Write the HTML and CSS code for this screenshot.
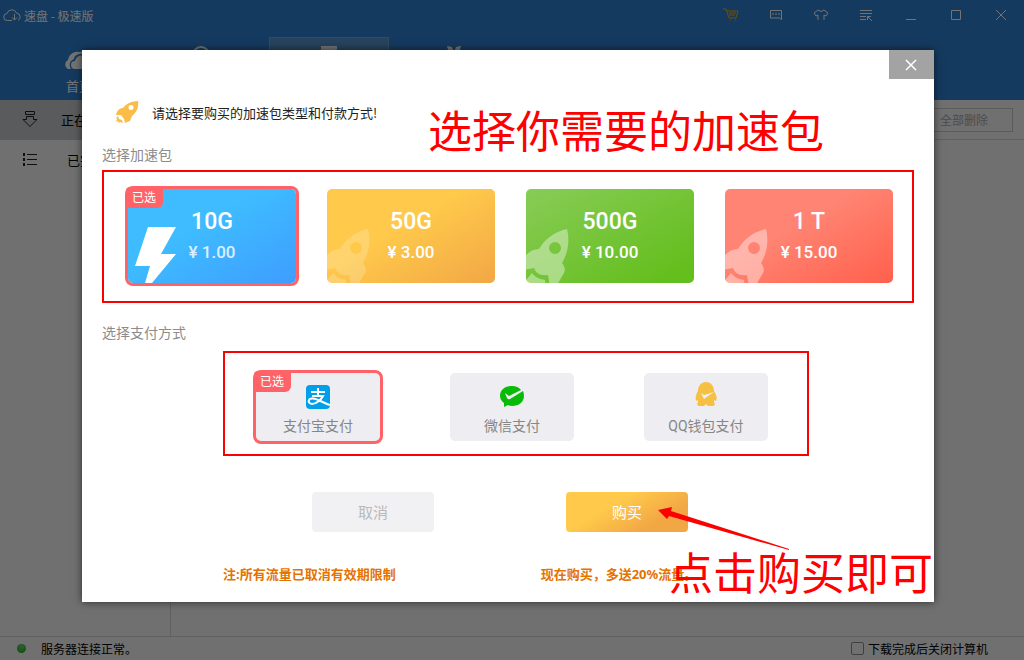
FILE: index.html
```html
<!DOCTYPE html>
<html lang="zh-CN">
<head>
    <meta charset="UTF-8">
    <meta name="viewport" content="width=device-width, initial-scale=1.0">
    <title>速盘 - 极速版</title>
    <link rel="stylesheet" href="styles.css">
</head>
<body>
    <svg class="sprite" aria-hidden="true">
        <symbol id="rocket" viewBox="0 0 44 56">
            <path fill-rule="evenodd" d="M41 2C28 5 19 12 13 22C7 22 3 25-2 30V43L8 41C10 46 14 49 22 48L24 60L31 58L38 46C40 42 38 39 36 36C42 26 44 14 41 2ZM29 15a6 6 0 1 1 0 12a6 6 0 1 1 0-12Z"/>
            <path d="M6 46C10 51 14 52 19 53L20 60L-2 60L1 52Z"/>
        </symbol>
    </svg>

    <div class="app">
        <header>
            <div class="title-bar">
                <svg class="logo" viewBox="0 0 18 14" width="18" height="14"><path d="M9 12.500H4.500a3.500 3.500 0 0 1-.5-7a5 5 0 0 1 9.500-.5a4 4 0 0 1 1.500 7.500M11.500 6v6M9 9.500l2.500 2.500L14 9.500"/></svg>
                <span class="app-name">速盘 - 极速版</span>
                <div class="window-tools">
                    <button type="button" class="cart" aria-label="购物车"><svg viewBox="0 0 16 14"><path d="M0 1h3l3 9h7l2-7H4M6 5h7M6 7h6M7 12h1M12 12h1"/></svg></button>
                    <button type="button" aria-label="消息"><svg viewBox="0 0 16 14"><path d="M2.500 2.500h11v9l-2-1.500h-9zM4 6h2M7 6h2M10 6h2"/></svg></button>
                    <button type="button" aria-label="皮肤"><svg viewBox="0 0 16 14"><path d="M5 2L1 5l2 3 2-1v5M11 2l4 3-2 3-2-1v5M5 2q3 3 6 0"/></svg></button>
                    <button type="button" aria-label="菜单"><svg viewBox="0 0 16 14"><path d="M2 2.500h12M2 5.500h12M2 8.500h6M2 11.500h6M9 8.500h4M9.500 8v4M10 9l4 4"/></svg></button>
                    <button type="button" aria-label="最小化"><svg viewBox="0 0 16 14"><path d="M3 11.500h10"/></svg></button>
                    <button type="button" aria-label="最大化"><svg viewBox="0 0 16 14"><path d="M3.500 2.500h9v9h-9z"/></svg></button>
                    <button type="button" aria-label="关闭"><svg viewBox="0 0 16 14"><path d="M3 2l10 10M13 2L3 12"/></svg></button>
                </div>
            </div>
            <nav class="tabs">
                <button type="button" class="tab">
                    <svg viewBox="0 0 32 20" width="32" height="20"><path d="M5 18a5 5 0 0 1 0-9C6 4 10 0 16 1q4-1 6 2C15 2 11 5 11 8c-5 2-5 7-3 10z"/><path d="M12 18a4 4 0 0 1 0-8c1-5 7-7 11-4q3 1 4 4a4 4 0 0 1 0 8z"/></svg>
                    首页
                </button>
                <button type="button" class="tab" aria-label="搜索"><svg viewBox="0 0 32 26" width="32" height="26"><circle class="ring" cx="13" cy="9" r="8"/></svg></button>
                <button type="button" class="tab active" aria-label="下载"><svg viewBox="0 0 32 26" width="32" height="26"><path d="M8 0h16v26H8z"/></svg></button>
                <button type="button" class="tab" aria-label="工具"><svg viewBox="0 0 32 26" width="32" height="26"><path d="M9 0l5 1 2 5 2-5 5-1-4 14h-6z"/></svg></button>
            </nav>
        </header>
        <div class="workspace">
            <aside>
                <button type="button" class="side-item active">
                    <svg viewBox="0 0 16 16" width="16" height="16"><path d="M3.500.5h9v3h-9zM4.500 5.500h7v3h3.500l-7 7-7-7h3.500z"/></svg>
                    正在下载
                </button>
                <button type="button" class="side-item done">
                    <svg viewBox="0 0 16 16" width="16" height="16"><path d="M5 3.500h10M5 8.500h10M5 13.500h10"/><path class="bullets" d="M1 3.500h2M1 8.500h2M1 13.500h2"/></svg>
                    已完成
                </button>
            </aside>
            <main>
                <div class="toolbar"><button type="button" class="delete-all" disabled>全部删除</button></div>
            </main>
        </div>
        <footer>
            <span class="status"><i class="dot"></i>服务器连接正常。</span>
            <label class="shutdown"><input type="checkbox">下载完成后关闭计算机</label>
        </footer>
    </div>

    <div class="backdrop">
        <form class="modal" role="dialog" aria-labelledby="dialogTitle">
            <button type="button" class="close" aria-label="关闭"><svg viewBox="0 0 12 12" width="12" height="12"><path d="M1 1l10 10M11 1L1 11"/></svg></button>
            <h1 id="dialogTitle">
                <svg class="title-rocket" viewBox="0 0 24 24" width="24" height="24"><path fill-rule="evenodd" d="M23 1C16 1 11 4 8 8C4 8 2 11 1 15L6 15L9 19L10 23L15 21L17 16C22 12 24 7 23 1ZM16 5a2.500 2.500 0 1 1 0 5a2.500 2.500 0 1 1 0-5Z"/><path d="M3 16l1 3 3 1 1 3-3-1-1 1-1-2-2 1 1-3-1-1z"/></svg>
                请选择要购买的加速包类型和付款方式!
            </h1>

            <h2>选择加速包</h2>
            <div class="packs">
                <label class="card pack blue">
                    <input type="radio" name="pack" checked>
                    <span class="badge">已选</span>
                    <svg class="bolt" viewBox="0 0 42 56" width="42" height="56"><path d="M13 0H41L26 27H41L17 56H10L15 39H0Z"/></svg>
                    <span class="size">10G</span>
                    <span class="price">¥ 1.00</span>
                </label>
                <label class="card pack yellow">
                    <input type="radio" name="pack">
                    <svg class="rocket" width="44" height="56"><use href="#rocket"/></svg>
                    <span class="size">50G</span>
                    <span class="price">¥ 3.00</span>
                </label>
                <label class="card pack green">
                    <input type="radio" name="pack">
                    <svg class="rocket" width="44" height="56"><use href="#rocket"/></svg>
                    <span class="size">500G</span>
                    <span class="price">¥ 10.00</span>
                </label>
                <label class="card pack red">
                    <input type="radio" name="pack">
                    <svg class="rocket" width="44" height="56"><use href="#rocket"/></svg>
                    <span class="size">1 T</span>
                    <span class="price">¥ 15.00</span>
                </label>
            </div>

            <h2>选择支付方式</h2>
            <div class="payments">
                <label class="card pay">
                    <input type="radio" name="pay" checked>
                    <span class="badge">已选</span>
                    <svg viewBox="0 0 24 24" width="24" height="24"><rect width="24" height="24" rx="4" fill="#00a0e9"/><path class="zhi" d="M5 7h14M12 3v8M6 11h11C15 15 10 19 6 19C1 18 2 13 7 13.500C12 14 17 18 24 20"/></svg>
                    <span>支付宝支付</span>
                </label>
                <label class="card pay">
                    <input type="radio" name="pay">
                    <svg viewBox="0 0 24 24" width="24" height="24"><path fill="#09bb07" d="M12 1C5 1 0 5 0 11q0 4 4 7l0 4 4-2q2 1 4 1c7 0 12-4 12-10q0-3-1-5L10 14q-2 1-3-1L5 8l4 3 12-6Q18 1 12 1z"/></svg>
                    <span>微信支付</span>
                </label>
                <label class="card pay qq">
                    <input type="radio" name="pay">
                    <svg viewBox="0 0 24 24" width="24" height="24"><path fill="#f6c143" d="M12 0C7 0 4 4 4 9C2 12 1 15 2 19L4 18V20Q2 23 5 24H10L12 22L14 24H19Q22 23 20 20V18L22 19Q24 15 20 9C20 4 17 0 12 0Z"/><path fill="#eeedf2" d="M7 11l3 2 10-3-10 7z"/></svg>
                    <span>QQ钱包支付</span>
                </label>
            </div>

            <div class="actions">
                <button type="button" class="cancel">取消</button>
                <button type="submit" class="buy">购买</button>
            </div>
            <div class="notes">
                <p>注:所有流量已取消有效期限制</p>
                <p>现在购买，多送20%流量。</p>
            </div>

            <span class="callout callout-pack">选择你需要的加速包</span>
            <span class="callout callout-buy">点击购买即可</span>
            <svg class="arrow" viewBox="0 0 132 44" width="132" height="44"><path d="M0 3L14 0L13 4L131 42V43L11 9L9 12Z"/></svg>
        </form>
    </div>
</body>
</html>
```
FILE: styles.css
```css
* {
    box-sizing: border-box;
}
body {
    margin: 0;
    font-family: "Noto Sans CJK SC", sans-serif;
    font-size: 12px;
    color: #000;
}
button {
    font: inherit;
    color: inherit;
    border: none;
    padding: 0;
    background: none;
    cursor: pointer;
}
h1, h2, p {
    margin: 0;
    font-weight: normal;
}
.sprite {
    position: absolute;
    width: 0;
    height: 0;
}

/* main window */
.app {
    display: flex;
    flex-direction: column;
    min-height: 100vh;
    background: #f9f9f9;
}
header {
    height: 100px;
    background: #2f81d3;
    color: #fff;
}
.title-bar {
    display: flex;
    align-items: center;
    height: 30px;
    padding: 0 1px 0 3px;
}
.logo, .window-tools svg {
    fill: none;
    stroke: #fff;
}
.app-name {
    margin-left: 3px;
}
.window-tools {
    display: flex;
    margin-left: auto;
}
.window-tools button {
    display: flex;
    align-items: center;
    justify-content: center;
    width: 45px;
    height: 30px;
}
.window-tools svg {
    width: 16px;
    height: 14px;
}
.window-tools .cart svg {
    stroke: #ffa800;
}
.tabs {
    display: flex;
    gap: 5px;
    padding: 7px 19px 0;
}
.tab {
    display: flex;
    flex-direction: column;
    align-items: center;
    width: 120px;
    height: 63px;
    padding-top: 8px;
    gap: 5px;
    font-size: 13px;
    border: 1px solid transparent;
}
.tab:first-child {
    padding-top: 13px;
}
.tab svg {
    fill: #fff;
}
.tab .ring {
    fill: none;
    stroke: #fff;
    stroke-width: 2;
}
.tab.active {
    background: #5896cf;
    border-color: #73a9da;
}
.workspace {
    display: flex;
    flex: 1;
}
aside {
    width: 171px;
    border-right: 1px solid #d5d5d5;
}
.side-item {
    display: flex;
    align-items: center;
    gap: 23px;
    width: 100%;
    height: 40px;
    padding: 0 0 2px 22px;
    font-size: 13px;
}
.side-item.done {
    gap: 29px;
}
.side-item.active {
    background: #c8cbce;
}
.side-item svg {
    fill: none;
    stroke: #222;
}
.side-item .bullets {
    stroke-width: 3;
}
main {
    flex: 1;
}
.toolbar {
    display: flex;
    justify-content: flex-end;
    height: 40px;
    padding: 8px 11px;
    border-bottom: 1px solid #d5d5d5;
}
.delete-all {
    width: 98px;
    height: 24px;
    padding-bottom: 2px;
    border: 1px solid #cbcbcb;
    color: #a8a8a8;
}
footer {
    display: flex;
    align-items: center;
    justify-content: space-between;
    height: 24px;
    padding: 0 36px 0 17px;
    border-top: 1px solid #d5d5d5;
}
.status, .shutdown {
    display: flex;
    align-items: center;
}
.dot {
    width: 9px;
    height: 9px;
    margin-right: 15px;
    border-radius: 50%;
    background: radial-gradient(circle at 50% 30%, #6ad46a, #16a51c);
}
.shutdown input {
    appearance: none;
    width: 13px;
    height: 13px;
    margin: 0 4px 0 0;
    border: 1px solid #8e8f8f;
    border-radius: 2px;
}

/* purchase dialog */
.backdrop {
    position: absolute;
    inset: 0;
    display: flex;
    justify-content: center;
    align-items: flex-start;
    padding: 50px 90px 0 82px;
    background: rgba(0, 0, 0, 0.55);
}
.modal {
    position: relative;
    flex: 1;
    max-width: 852px;
    padding: 49px 20px 18px;
    background: #fff;
    box-shadow: 0 0 8px rgba(0, 0, 0, 0.6);
}
.close {
    position: absolute;
    top: 0;
    right: 0;
    display: flex;
    align-items: center;
    justify-content: center;
    width: 45px;
    height: 29px;
    padding-right: 1px;
    background: #a3a3a3;
}
.close svg {
    fill: none;
    stroke: #fff;
    stroke-width: 1.5;
}
h1 {
    display: flex;
    align-items: center;
    gap: 13px;
    height: 26px;
    padding-left: 13px;
    font-size: 13px;
    color: #222;
}
.title-rocket {
    fill: #fbbd4a;
}
h2 {
    margin-top: 19px;
    font-size: 14px;
    line-height: 20px;
    color: #8c8c8c;
}
.packs, .payments {
    display: flex;
    border: 2px solid #f00;
}
.packs {
    gap: 31px;
    margin-top: 6px;
    padding: 17px 19px 18px 24px;
}
.packs + h2 {
    margin-top: 19px;
}
.payments {
    justify-content: space-between;
    margin: 9px 105px 0 121px;
    padding: 20px 39px 13px 31px;
}
.card {
    position: relative;
    display: flex;
    flex-direction: column;
    align-items: center;
    border-radius: 5px;
    cursor: pointer;
}
.card input {
    position: absolute;
    opacity: 0;
}
.card:has(input:checked) {
    box-shadow: 0 0 0 3px #ff6267;
}
.badge {
    position: absolute;
    top: -2px;
    left: -2px;
    width: 37px;
    height: 21px;
    padding-right: 1px;
    border-radius: 4px 0 6px 0;
    background: #ff6267;
    color: #fff;
    font-size: 12px;
    font-weight: 400;
    line-height: 22px;
    text-align: center;
}
.pack {
    flex: 1;
    height: 94px;
    padding-top: 19px;
    color: #fff;
    font-family: Roboto, "Noto Sans CJK SC", sans-serif;
    font-weight: 500;
}
.size {
    font-size: 23px;
    line-height: 28px;
}
.price {
    margin-top: 4px;
    font-size: 17px;
    line-height: 24px;
}
.blue .price {
    opacity: 0.8;
}
.blue {
    background: linear-gradient(150deg, #3ebcff 40%, #3e9dff);
}
.yellow {
    background: linear-gradient(150deg, #ffca4b 40%, #f2a745);
}
.green {
    background: linear-gradient(150deg, #88cc57, #64be1d 90%);
}
.red {
    background: linear-gradient(150deg, #ff8473 40%, #ff604c);
}
.rocket, .bolt {
    position: absolute;
    left: 0;
    bottom: 0;
    fill: #fff;
}
.bolt {
    left: 7px;
}
.rocket {
    opacity: 0.4;
    border-bottom-left-radius: 5px;
}
.yellow .rocket {
    opacity: 0.2;
}
.pay {
    width: 124px;
    height: 68px;
    padding-top: 12px;
    gap: 7px;
    background: #eeedf2;
    color: #868686;
    font-family: Roboto, "Noto Sans CJK SC", sans-serif;
    font-size: 14px;
    line-height: 20px;
}
.pay.qq {
    padding-top: 9px;
    gap: 10px;
}
.zhi {
    fill: none;
    stroke: #fff;
    stroke-width: 2;
}
.actions {
    display: flex;
    gap: 132px;
    margin: 36px 0 0 210px;
}
.actions button {
    width: 122px;
    height: 40px;
    padding-bottom: 2px;
    border-radius: 4px;
    font-size: 15px;
}
.cancel {
    background: #f1f1f4;
    color: #b9b9b9;
}
.buy {
    background: linear-gradient(150deg, #ffca4b 35%, #f2a745 75%);
    color: #fff;
}
.notes {
    display: flex;
    gap: 145px;
    margin: 32px 0 0 121px;
    font-family: "Noto Sans", "Noto Sans CJK SC", sans-serif;
    font-size: 13px;
    line-height: 20px;
    color: #e47300;
}
.notes p {
    font-weight: bold;
}

/* red guide marks over the dialog */
.callout {
    position: absolute;
    font-size: 44px;
    line-height: 50px;
    white-space: nowrap;
    color: #f00;
}
.callout-pack {
    top: 54px;
    right: 110px;
}
.callout-buy {
    right: 1px;
    bottom: 6px;
}
.arrow {
    position: absolute;
    top: 457px;
    right: 144px;
    fill: #f00;
}
```
